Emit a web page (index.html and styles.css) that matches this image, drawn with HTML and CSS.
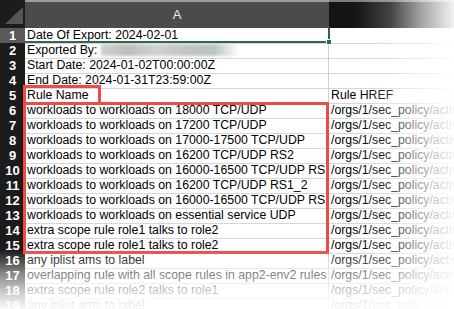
FILE: index.html
```html
<!DOCTYPE html>
<html>
<head>
<meta charset="utf-8">
<link rel="stylesheet" href="styles.css">
</head>
<body>
<div class="sheet">
  <div class="hdr">
    <div class="corner"><svg width="25" height="28" viewBox="0 0 25 28"><polygon points="5,24 23,24 23,7" fill="#555"/></svg></div>
    <div class="colhdr sel">A</div>
    <div class="colhdr">B</div>
  </div>
  <div class="row"><div class="rh sel">1</div><div class="c a">Date Of Export: 2024-02-01</div><div class="c b"></div></div>
  <div class="row"><div class="rh">2</div><div class="c a">Exported By:<span class="redact"></span></div><div class="c b"></div></div>
  <div class="row"><div class="rh">3</div><div class="c a">Start Date: 2024-01-02T00:00:00Z</div><div class="c b"></div></div>
  <div class="row"><div class="rh">4</div><div class="c a">End Date: 2024-01-31T23:59:00Z</div><div class="c b"></div></div>
  <div class="row"><div class="rh">5</div><div class="c a">Rule Name</div><div class="c b">Rule HREF</div></div>
  <div class="row"><div class="rh">6</div><div class="c a">workloads to workloads on 18000 TCP/UDP</div><div class="c b">/orgs/1/sec_policy/active/rule_sets/12/sec_rules/41</div></div>
  <div class="row"><div class="rh">7</div><div class="c a">workloads to workloads on 17200 TCP/UDP</div><div class="c b">/orgs/1/sec_policy/active/rule_sets/12/sec_rules/42</div></div>
  <div class="row"><div class="rh">8</div><div class="c a">workloads to workloads on 17000-17500 TCP/UDP</div><div class="c b">/orgs/1/sec_policy/active/rule_sets/12/sec_rules/43</div></div>
  <div class="row"><div class="rh">9</div><div class="c a">workloads to workloads on 16200 TCP/UDP RS2</div><div class="c b">/orgs/1/sec_policy/active/rule_sets/13/sec_rules/44</div></div>
  <div class="row"><div class="rh">10</div><div class="c a">workloads to workloads on 16000-16500 TCP/UDP RS1</div><div class="c b">/orgs/1/sec_policy/active/rule_sets/13/sec_rules/45</div></div>
  <div class="row"><div class="rh">11</div><div class="c a">workloads to workloads on 16200 TCP/UDP RS1_2</div><div class="c b">/orgs/1/sec_policy/active/rule_sets/14/sec_rules/46</div></div>
  <div class="row"><div class="rh">12</div><div class="c a">workloads to workloads on 16000-16500 TCP/UDP RS2</div><div class="c b">/orgs/1/sec_policy/active/rule_sets/14/sec_rules/47</div></div>
  <div class="row"><div class="rh">13</div><div class="c a">workloads to workloads on essential service UDP</div><div class="c b">/orgs/1/sec_policy/active/rule_sets/15/sec_rules/48</div></div>
  <div class="row"><div class="rh">14</div><div class="c a">extra scope rule role1 talks to role2</div><div class="c b">/orgs/1/sec_policy/active/rule_sets/16/sec_rules/49</div></div>
  <div class="row"><div class="rh">15</div><div class="c a">extra scope rule role1 talks to role2</div><div class="c b">/orgs/1/sec_policy/active/rule_sets/16/sec_rules/50</div></div>
  <div class="row"><div class="rh">16</div><div class="c a">any iplist ams to label</div><div class="c b">/orgs/1/sec_policy/active/rule_sets/17/sec_rules/51</div></div>
  <div class="row"><div class="rh">17</div><div class="c a">overlapping rule with all scope rules in app2-env2 rules</div><div class="c b">/orgs/1/sec_policy/active/rule_sets/18/sec_rules/52</div></div>
  <div class="row"><div class="rh">18</div><div class="c a">extra scope rule role2 talks to role1</div><div class="c b">/orgs/1/sec_policy/active/rule_sets/19/sec_rules/53</div></div>
  <div class="row"><div class="rh">19</div><div class="c a">any iplist ams to label</div><div class="c b">/orgs/1/sec_policy/active/rule_sets/20/sec_rules/54</div></div>

  <div class="selbox"><span class="handle"></span></div>
  <div class="mark mark-name"></div>
  <div class="mark mark-rules"></div>
  <div class="fade-right"></div>
  <div class="fade-bottom"></div>
</div>
</body>
</html>
```

FILE: styles.css
```css
* { box-sizing: border-box; }
html, body { margin: 0; padding: 0; background: #fff; }
.sheet {
  position: relative;
  width: 454px;
  height: 309px;
  overflow: hidden;
  font-family: "Liberation Sans", Arial, sans-serif;
  font-size: 12.3px;
  color: #000;
}
.hdr {
  display: grid;
  grid-template-columns: 25px 304px 1fr;
  height: 28px;
}
.corner { background: #1c1c1c; }
.corner svg { display: block; }
.colhdr {
  background: #141414;
  color: transparent;
  display: flex;
  align-items: center;
  justify-content: center;
  font-size: 13px;
  box-shadow: inset 0 2px 0 rgba(255,255,255,0.45);
}
.colhdr.sel { background: #4b4b4b; color: #ececec; }
.row {
  display: grid;
  grid-template-columns: 25px 304px 1fr;
  height: 15px;
}
.rh {
  background: #1b1b1b;
  color: #fff;
  font-weight: bold;
  font-size: 13px;
  line-height: 15px;
  text-align: center;
  border-bottom: 1px solid #2e2e2e;
}
.rh.sel { background: #5a5a5a; }
.c {
  border-bottom: 1px solid #d6d6d6;
  line-height: 14px;
  white-space: nowrap;
  overflow: hidden;
}
.c.a { padding-left: 2px; border-right: 1px solid #d0d0d0; }
.c.b { padding-left: 2px; }
.redact {
  display: inline-block;
  width: 138px;
  height: 12px;
  margin-left: 4px;
  vertical-align: -2px;
  background: linear-gradient(90deg, #cfcfcf 0%, #bdbdbd 20%, #d2d2d2 40%, #c3c3c3 60%, #b9c4bd 82%, rgba(255,255,255,0) 100%);
  filter: blur(1.5px);
}
.selbox {
  position: absolute;
  left: 25px;
  top: 27px;
  width: 305px;
  height: 16px;
  border-right: 2px solid #2c6b48;
  border-bottom: 2px solid #2c6b48;
}
.handle {
  position: absolute;
  right: -4px;
  bottom: -4px;
  width: 6px;
  height: 6px;
  background: #2c6b48;
  border: 1px solid #fff;
}
.mark {
  position: absolute;
  border: 3px solid #f14848;
}
.mark-name { left: 23px; top: 85px; width: 78px; height: 20px; }
.mark-rules { left: 23px; top: 102px; width: 306px; height: 152px; }
.fade-right {
  position: absolute;
  top: 0;
  bottom: 0;
  left: 355px;
  right: 0;
  background: linear-gradient(90deg, rgba(255,255,255,0) 0px, rgba(255,255,255,0.2) 35px, rgba(255,255,255,0.6) 65px, rgba(255,255,255,0.95) 99px);
}
.fade-bottom {
  position: absolute;
  left: 0;
  right: 0;
  top: 250px;
  bottom: 0;
  background: linear-gradient(180deg, rgba(255,255,255,0) 0px, rgba(255,255,255,0.2) 10px, rgba(255,255,255,0.5) 25px, rgba(255,255,255,0.74) 40px, rgba(255,255,255,0.93) 55px, rgba(255,255,255,0.97) 59px);
}
```
